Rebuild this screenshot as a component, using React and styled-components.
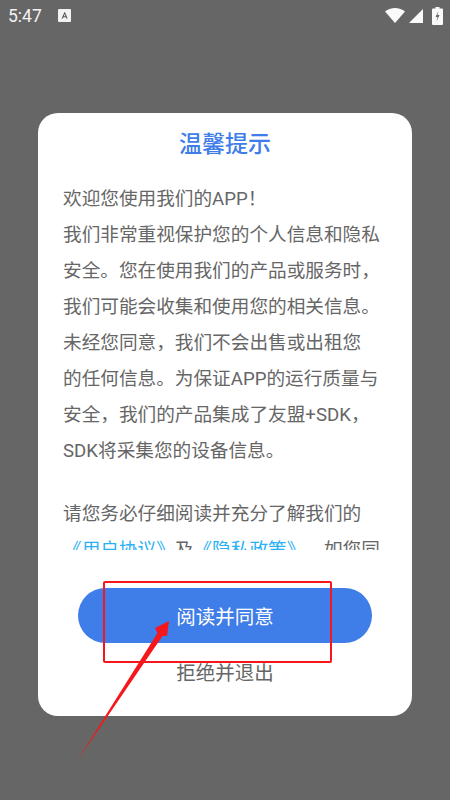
import React from 'react'
import styled, { createGlobalStyle } from 'styled-components'

const GlobalStyle = createGlobalStyle`
  html, body {
    margin: 0;
    padding: 0;
    background: #666;
  }
  * {
    box-sizing: border-box;
  }
`

const Screen = styled.div`
  position: relative;
  width: 450px;
  height: 800px;
  overflow: hidden;
  background: #666;
  font-family: Roboto, 'Noto Sans CJK SC', sans-serif;
  display: flex;
  flex-direction: column;
`

const StatusBar = styled.div`
  height: 31px;
  padding: 0 7px 0 8px;
  display: flex;
  align-items: center;
  color: #f2f2f2;
`

const Clock = styled.span`
  font-size: 17.5px;
  width: 50px;
`

const StatusIcons = styled.div`
  margin-left: auto;
  display: flex;
  align-items: center;
  gap: 4px;

  svg:last-child {
    margin-left: 5px;
  }
`

const Dialog = styled.div`
  margin: 82px 38px 0;
  height: 603px;
  background: #fff;
  border-radius: 20px;
  padding: 0 25px;
  display: flex;
  flex-direction: column;
`

const Title = styled.h1`
  margin: 15px 0 0;
  text-align: center;
  font-size: 23px;
  line-height: 34px;
  font-weight: 500;
  color: #3f7de8;
`

const Message = styled.div`
  margin-top: 19px;
  height: 369px;
  overflow: hidden;
  font-size: 18.65px;
  line-height: 36px;
  color: #666;
  text-spacing-trim: space-all;
`

const Line = styled.div`
  white-space: nowrap;
  margin-top: ${props => (props.$gap ? '27px' : '0')};
`

const Link = styled.span`
  color: #2ab0f5;
`

const AgreeButton = styled.button`
  margin: 38px 15px 0;
  height: 55px;
  flex: none;
  border: 0;
  border-radius: 28px;
  background: #3f7de8;
  color: #fff;
  font: inherit;
  font-size: 19.5px;
`

const RefuseButton = styled.button`
  margin-top: 13px;
  border: 0;
  background: none;
  color: #666;
  font: inherit;
  font-size: 19.5px;
  line-height: 34px;
`

const Highlight = styled.div`
  position: absolute;
  left: 103px;
  top: 581px;
  width: 229px;
  height: 82px;
  border: 2.5px solid #f5171b;
  border-radius: 2px;
`

const Arrow = styled.svg`
  position: absolute;
  left: 0;
  top: 0;
`

const KeyboardBadge = () => (
  <svg width="13" height="13" viewBox="0 0 13 13">
    <rect width="13" height="13" rx="1" fill="#f2f2f2" />
    <path d="M3.6 9.5 6.5 3h.4l2.7 6.500H8.300l-.5-1.300H5.400l-.5 1.300zM5.800 7.200h1.700l-.8-2.200z" fill="#555" />
  </svg>
)

const WifiIcon = () => (
  <svg width="20" height="15" viewBox="0 0 20 15">
    <path d="M0 3.500C2.800 1.200 6.200 0 10 0s7.200 1.200 10 3.500L10 15z" fill="#fafafa" />
  </svg>
)

const SignalIcon = () => (
  <svg width="14" height="14" viewBox="0 0 14 14">
    <path d="M14 0v14H0z" fill="#fafafa" />
  </svg>
)

const BatteryIcon = () => (
  <svg width="11" height="18" viewBox="0 0 11 18">
    <path d="M3.500 0h4v1.500H10a1 1 0 0 1 1 1V17a1 1 0 0 1-1 1H1a1 1 0 0 1-1-1V2.500a1 1 0 0 1 1-1h2.500z" fill="#fafafa" />
    <path d="M6.500 4 3.500 10h2l-1 4.500 3-6.500h-2z" fill="#666" />
  </svg>
)

const App = () => (
  <Screen>
    <GlobalStyle />
    <StatusBar>
      <Clock>5:47</Clock>
      <KeyboardBadge />
      <StatusIcons>
        <WifiIcon />
        <SignalIcon />
        <BatteryIcon />
      </StatusIcons>
    </StatusBar>

    <Dialog>
      <Title>温馨提示</Title>
      <Message>
        <Line>欢迎您使用我们的APP！</Line>
        <Line>我们非常重视保护您的个人信息和隐私</Line>
        <Line>安全。您在使用我们的产品或服务时，</Line>
        <Line>我们可能会收集和使用您的相关信息。</Line>
        <Line>未经您同意，我们不会出售或出租您</Line>
        <Line>的任何信息。为保证APP的运行质量与</Line>
        <Line>安全，我们的产品集成了友盟+SDK，</Line>
        <Line>SDK将采集您的设备信息。</Line>
        <Line $gap>请您务必仔细阅读并充分了解我们的</Line>
        <Line>
          <Link>《用户协议》</Link>及<Link>《隐私政策》</Link>，如您同
        </Line>
      </Message>
      <AgreeButton>阅读并同意</AgreeButton>
      <RefuseButton>拒绝并退出</RefuseButton>
    </Dialog>

    <Highlight />
    <Arrow width="450" height="800" viewBox="0 0 450 800">
      <path d="M77 761 L157.500 633 L155 628 L169 621 L167 636 L162.500 636 Z" fill="#f5171b" />
    </Arrow>
  </Screen>
)

export default App
